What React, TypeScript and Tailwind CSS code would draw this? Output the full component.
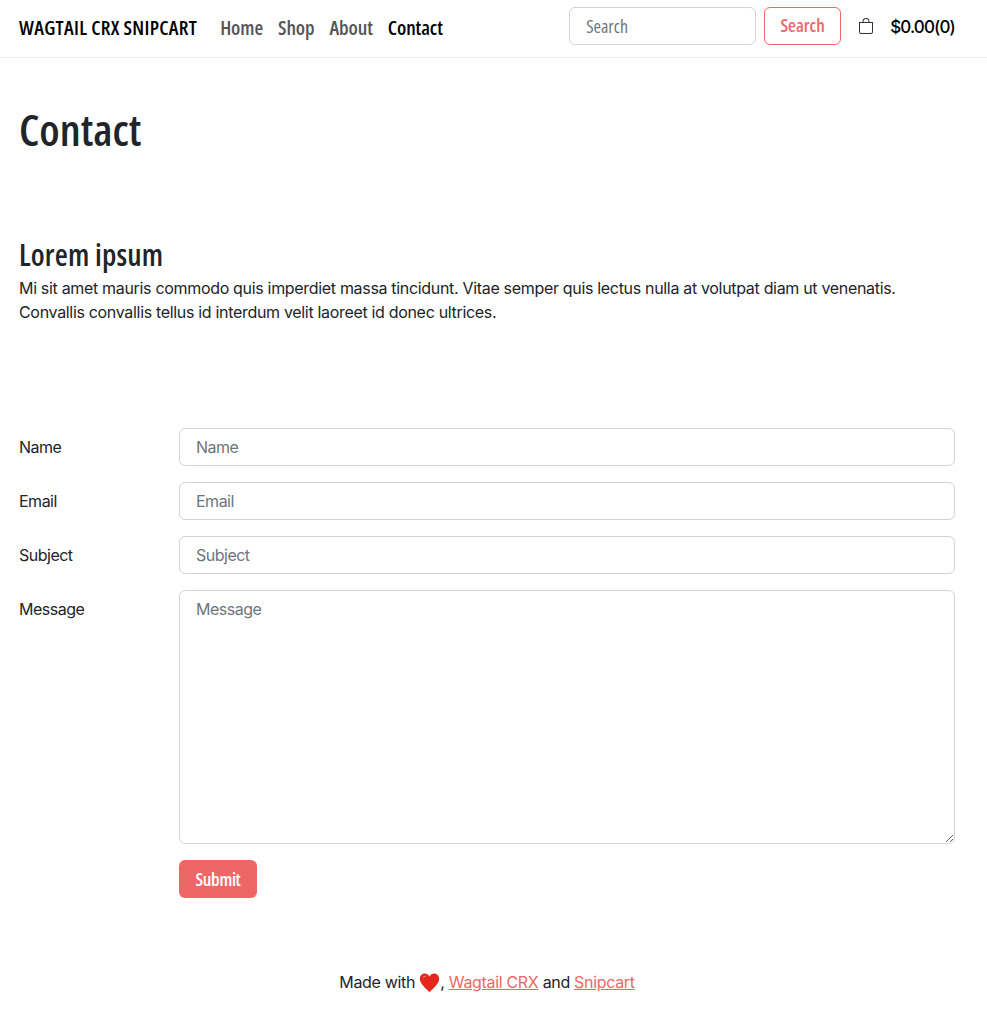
import React from "react";

const narrow = "font-['Open_Sans',sans-serif] font-stretch-condensed";
const inputClass =
  "w-full h-[38px] rounded-[6px] border border-[#ced4da] bg-white px-4 text-base tracking-[-0.5px] text-[#212529] placeholder:text-[#6c757d] outline-none";

const Bag = () => (
  <svg width="16" height="16" viewBox="0 0 16 16" fill="#333333">
    <path d="M8 1a2.5 2.5 0 0 1 2.5 2.5V4h-5v-.5A2.5 2.5 0 0 1 8 1zm3.5 3v-.5a3.5 3.5 0 1 0-7 0V4H1v10a2 2 0 0 0 2 2h10a2 2 0 0 0 2-2V4h-3.5zM2 5h12v9a1 1 0 0 1-1 1H3a1 1 0 0 1-1-1V5z" />
  </svg>
);

const Heart = () => (
  <svg width="21" height="21" viewBox="0 0 24 24" className="inline-block align-[-5px]">
    <path
      d="M12 23C8 18.8 1 13.8 1 7.7 1 4.2 3.6 1.8 6.6 1.8c2.3 0 4.3 1.2 5.4 3.4 1.1-2.2 3.1-3.4 5.4-3.4 3 0 5.6 2.4 5.6 5.9 0 6.1-7 11.1-11 15.3z"
      fill="#e5271c"
    />
    <path d="M5 5.2c1-.9 2.6-1 3.4-.4-1.6.2-2.6 1-3.2 2.4-.4-.6-.5-1.4-.2-2z" fill="#ff8a80" />
  </svg>
);

function Row({ label, children }: { label: string; children: React.ReactNode }) {
  return (
    <div className="flex mb-4">
      <label className="w-[160px] shrink-0 pt-[7px] text-base leading-6 tracking-[-0.5px] text-[#212529]">{label}</label>
      <div className="flex-1">{children}</div>
    </div>
  );
}

export default function App() {
  return (
    <div className="min-h-[1036px] bg-white font-['Inter',sans-serif] tracking-[-0.32px] text-[#212529]">
      <nav className="flex h-[58px] items-center justify-between border-b border-[#eeeeee] pl-[19px] pr-[32px] tracking-normal">
        <div className={`flex items-center whitespace-nowrap pb-[2px] ${narrow}`}>
          <span className="mr-[23px] text-[20px] font-semibold tracking-[0.3px] text-black">WAGTAIL CRX SNIPCART</span>
          <div className="flex gap-[15px] text-[20px] font-semibold tracking-[-0.1px] text-[#555555]">
            <span>Home</span>
            <span>Shop</span>
            <span>About</span>
            <span className="text-black">Contact</span>
          </div>
        </div>
        <div className="flex items-center pb-[6px]">
          <input
            placeholder="Search"
            className={`h-[38px] w-[187px] rounded-[6px] border border-[#ced4da] px-4 text-[18px] text-[#212529] placeholder:text-[#6c757d] outline-none ${narrow}`}
          />
          <button className={`ml-2 h-[38px] w-[77px] rounded-[6px] border border-[#ee6666] text-[18px] font-semibold text-[#ee6666] ${narrow}`}>
            Search
          </button>
          <span className="ml-[17px] flex">
            <Bag />
          </span>
          <span className="ml-4 mt-[4px] text-[17px] font-medium tracking-[-0.85px] text-black">$0.00(0)</span>
        </div>
      </nav>

      <main className="pl-[19px] pr-[32px]">
        <h1 className={`mt-[42px] text-[44px] leading-[58px] font-semibold tracking-normal text-[#212529] ${narrow}`}>Contact</h1>
        <h2 className={`mt-[79px] text-[30px] leading-[36px] font-semibold tracking-[0.15px] text-[#212529] ${narrow}`}>Lorem ipsum</h2>
        <p className="mt-[3px] text-base leading-6 text-[#212529]">
          Mi sit amet mauris commodo quis imperdiet massa tincidunt. Vitae semper quis lectus nulla at volutpat diam ut venenatis.
          <br />
          Convallis convallis tellus id interdum velit laoreet id donec ultrices.
        </p>

        <form className="mt-[104px]">
          <Row label="Name">
            <input placeholder="Name" className={inputClass} />
          </Row>
          <Row label="Email">
            <input placeholder="Email" className={inputClass} />
          </Row>
          <Row label="Subject">
            <input placeholder="Subject" className={inputClass} />
          </Row>
          <Row label="Message">
            <textarea
              placeholder="Message"
              className="block h-[254px] w-full rounded-[6px] border border-[#ced4da] bg-white px-4 py-[6px] text-base leading-6 tracking-[-0.5px] text-[#212529] placeholder:text-[#6c757d] outline-none"
            />
          </Row>
          <div className="pl-[160px]">
            <button className={`h-[38px] w-[78px] rounded-[6px] bg-[#ee6666] text-[18px] font-semibold text-white ${narrow}`}>
              Submit
            </button>
          </div>
        </form>
      </main>

      <footer className="mt-[72px] pl-[19px] pr-[32px] text-center text-base leading-6 text-[#212529]">
        Made with <Heart />, <a className="text-[#ee6666] underline">Wagtail CRX</a> and{" "}
        <a className="text-[#ee6666] underline">Snipcart</a>
      </footer>
    </div>
  );
}
